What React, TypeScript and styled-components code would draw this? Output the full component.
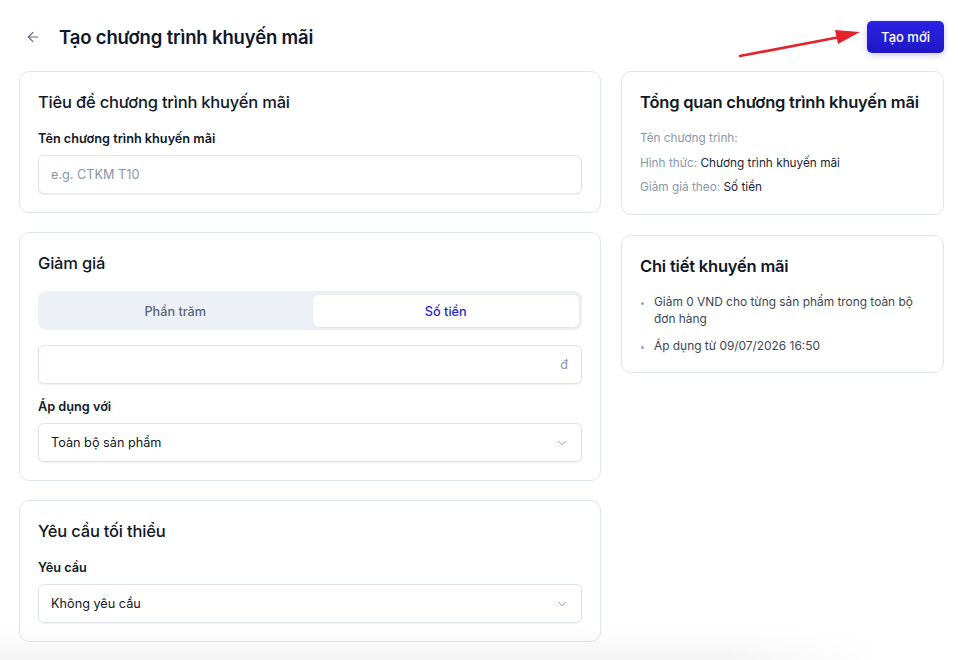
import React, { useState } from 'react';
import styled, { createGlobalStyle } from 'styled-components';
import { ArrowLeft, ChevronDown } from 'lucide-react';

const GlobalStyle = createGlobalStyle`
  * { box-sizing: border-box; }
  html, body {
    margin: 0;
    padding: 0;
    background: #ffffff;
    font-family: Inter, 'Noto Sans', 'Liberation Sans', sans-serif;
    color: #111827;
  }
`;

type DiscountMode = 'percent' | 'amount';

const App: React.FC = () => {
  const [mode, setMode] = useState<DiscountMode>('amount');

  return (
    <>
      <GlobalStyle />
      <Page>
        <Header>
          <TitleGroup>
            <BackButton aria-label="Quay lại">
              <ArrowLeft size={16} strokeWidth={1.6} />
            </BackButton>
            <PageTitle>Tạo chương trình khuyến mãi</PageTitle>
          </TitleGroup>
          <PrimaryButton>Tạo mới</PrimaryButton>
          <Pointer viewBox="0 0 130 30" width="130" height="30">
            <line x1="8" y1="28" x2="108" y2="9" stroke="#e3242b" strokeWidth="2.6" strokeLinecap="round" />
            <polygon points="128,4 103,2 106,16" fill="#e3242b" />
          </Pointer>
        </Header>

        <Columns>
          <MainColumn>
            <Card>
              <CardTitle>Tiêu đề chương trình khuyến mãi</CardTitle>
              <Field>
                <Label>Tên chương trình khuyến mãi</Label>
                <InputBox>
                  <TextInput placeholder="e.g. CTKM T10" />
                </InputBox>
              </Field>
            </Card>

            <Card>
              <CardTitle>Giảm giá</CardTitle>
              <Segmented>
                <Segment active={mode === 'percent'} onClick={() => setMode('percent')}>
                  Phần trăm
                </Segment>
                <Segment active={mode === 'amount'} onClick={() => setMode('amount')}>
                  Số tiền
                </Segment>
              </Segmented>
              <InputBox>
                <TextInput />
                <Suffix>{mode === 'amount' ? 'đ' : '%'}</Suffix>
              </InputBox>
              <Field>
                <Label>Áp dụng với</Label>
                <SelectBox>
                  <span>Toàn bộ sản phẩm</span>
                  <ChevronDown size={14} color="#8b95a5" strokeWidth={1.6} />
                </SelectBox>
              </Field>
            </Card>

            <Card>
              <CardTitle>Yêu cầu tối thiểu</CardTitle>
              <Field>
                <Label>Yêu cầu</Label>
                <SelectBox>
                  <span>Không yêu cầu</span>
                  <ChevronDown size={14} color="#8b95a5" strokeWidth={1.6} />
                </SelectBox>
              </Field>
            </Card>
          </MainColumn>

          <SideColumn>
            <Card>
              <CardTitle strong>Tổng quan chương trình khuyến mãi</CardTitle>
              <SummaryList>
                <SummaryRow>
                  <Muted>Tên chương trình:</Muted>
                </SummaryRow>
                <SummaryRow>
                  <Muted>Hình thức:</Muted> Chương trình khuyến mãi
                </SummaryRow>
                <SummaryRow>
                  <Muted>Giảm giá theo:</Muted> {mode === 'amount' ? 'Số tiền' : 'Phần trăm'}
                </SummaryRow>
              </SummaryList>
            </Card>

            <Card>
              <CardTitle strong>Chi tiết khuyến mãi</CardTitle>
              <BulletList>
                <li>Giảm 0 VND cho từng sản phẩm trong toàn bộ đơn hàng</li>
                <li>Áp dụng từ 09/07/2026 16:50</li>
              </BulletList>
            </Card>
          </SideColumn>
        </Columns>
      </Page>
      <BottomFade />
    </>
  );
};

const Page = styled.div`
  padding: 21px 14px 18px 19px;
`;

const Header = styled.header`
  position: relative;
  display: flex;
  align-items: center;
  justify-content: space-between;
  height: 32px;
  margin-bottom: 18px;
`;

const TitleGroup = styled.div`
  display: flex;
  align-items: center;
  gap: 14px;
`;

const BackButton = styled.button`
  display: flex;
  align-items: center;
  justify-content: center;
  width: 24px;
  height: 24px;
  margin-left: 2px;
  padding: 0;
  border: none;
  background: transparent;
  color: #5b6577;
  cursor: pointer;
`;

const PageTitle = styled.h1`
  margin: 0;
  font-size: 18.5px;
  font-weight: 600;
  color: #0f172a;
  letter-spacing: -0.15px;
`;

const PrimaryButton = styled.button`
  height: 32px;
  padding: 0 14px;
  border: none;
  border-radius: 5px;
  background: linear-gradient(180deg, #2a22e6 0%, #1f17c4 100%);
  color: #ffffff;
  font-family: inherit;
  font-size: 13px;
  font-weight: 500;
  box-shadow: 0 2px 6px rgba(40, 30, 200, 0.25);
  cursor: pointer;
`;

const Pointer = styled.svg`
  position: absolute;
  right: 82px;
  top: 7px;
  overflow: visible;
  pointer-events: none;
`;

const Columns = styled.div`
  display: grid;
  grid-template-columns: 582px 323px;
  column-gap: 20px;
  align-items: start;
`;

const MainColumn = styled.div`
  display: flex;
  flex-direction: column;
  gap: 19px;
`;

const SideColumn = styled.div`
  display: flex;
  flex-direction: column;
  gap: 20px;
`;

const Card = styled.section`
  display: flex;
  flex-direction: column;
  gap: 15px;
  padding: 18px;
  border: 1px solid #dfe5ee;
  border-radius: 10px;
  background: #ffffff;
`;

const CardTitle = styled.h2<{ strong?: boolean }>`
  margin: 0 0 2px;
  font-size: 16.5px;
  line-height: 24px;
  font-weight: ${p => (p.strong ? 600 : 500)};
  letter-spacing: -0.2px;
  color: #111827;
`;

const Field = styled.div`
  display: flex;
  flex-direction: column;
  gap: 8px;
`;

const Label = styled.label`
  font-size: 12.7px;
  line-height: 16px;
  font-weight: 600;
  color: #111827;
`;

const InputBox = styled.div`
  display: flex;
  align-items: center;
  height: 39px;
  padding: 0 12px;
  border: 1px solid #dfe3ea;
  border-radius: 6px;
  background: #ffffff;
  box-shadow: 0 1px 2px rgba(15, 23, 42, 0.06);
`;

const TextInput = styled.input`
  flex: 1;
  min-width: 0;
  border: none;
  outline: none;
  padding: 0;
  background: transparent;
  font-family: inherit;
  font-size: 12.7px;
  color: #111827;

  &::placeholder {
    color: #8a94a3;
  }
`;

const Suffix = styled.span`
  font-size: 12.7px;
  color: #8a94a3;
  margin-right: 1px;
`;

const Segmented = styled.div`
  display: grid;
  grid-template-columns: 1fr 1fr;
  gap: 4px;
  height: 39px;
  margin-top: -1px;
  padding: 4px 3px 3px 4px;
  border-radius: 8px;
  background: #edf1f7;
`;

const Segment = styled.button<{ active: boolean }>`
  border: none;
  border-radius: 6px;
  background: ${p => (p.active ? '#ffffff' : 'transparent')};
  color: ${p => (p.active ? '#2a1fd0' : '#5c6675')};
  font-family: inherit;
  font-size: 12.7px;
  font-weight: 500;
  box-shadow: ${p => (p.active ? '0 1px 2px rgba(15, 23, 42, 0.06)' : 'none')};
  cursor: pointer;
`;

const SelectBox = styled.div`
  display: flex;
  align-items: center;
  justify-content: space-between;
  height: 39px;
  padding: 0 12px;
  border: 1px solid #dfe3ea;
  border-radius: 6px;
  background: #ffffff;
  box-shadow: 0 1px 2px rgba(15, 23, 42, 0.06);
  font-size: 12.7px;
  color: #111827;
  cursor: pointer;
`;

const SummaryList = styled.div`
  display: flex;
  flex-direction: column;
  gap: 7.5px;
  margin-top: -1px;
`;

const SummaryRow = styled.div`
  font-size: 11.8px;
  line-height: 17px;
  color: #1d2433;
`;

const Muted = styled.span`
  color: #8a96ab;
`;

const BulletList = styled.ul`
  margin: -2px 0 0;
  padding: 0 0 0 14px;
  display: flex;
  flex-direction: column;
  gap: 10px;
  font-size: 11.9px;
  line-height: 17px;
  color: #3d4654;

  li::marker {
    color: #9aa3b2;
    font-size: 10px;
  }
`;

// soft shade along the bottom edge of the viewport
const BottomFade = styled.div`
  position: fixed;
  left: 0;
  bottom: 0;
  width: 880px;
  height: 34px;
  pointer-events: none;
  background: linear-gradient(180deg, rgba(0, 0, 0, 0) 0%, rgba(0, 0, 0, 0.045) 100%);
  -webkit-mask-image: linear-gradient(90deg, #000 82%, transparent 100%);
  mask-image: linear-gradient(90deg, #000 82%, transparent 100%);
`;

export default App;
